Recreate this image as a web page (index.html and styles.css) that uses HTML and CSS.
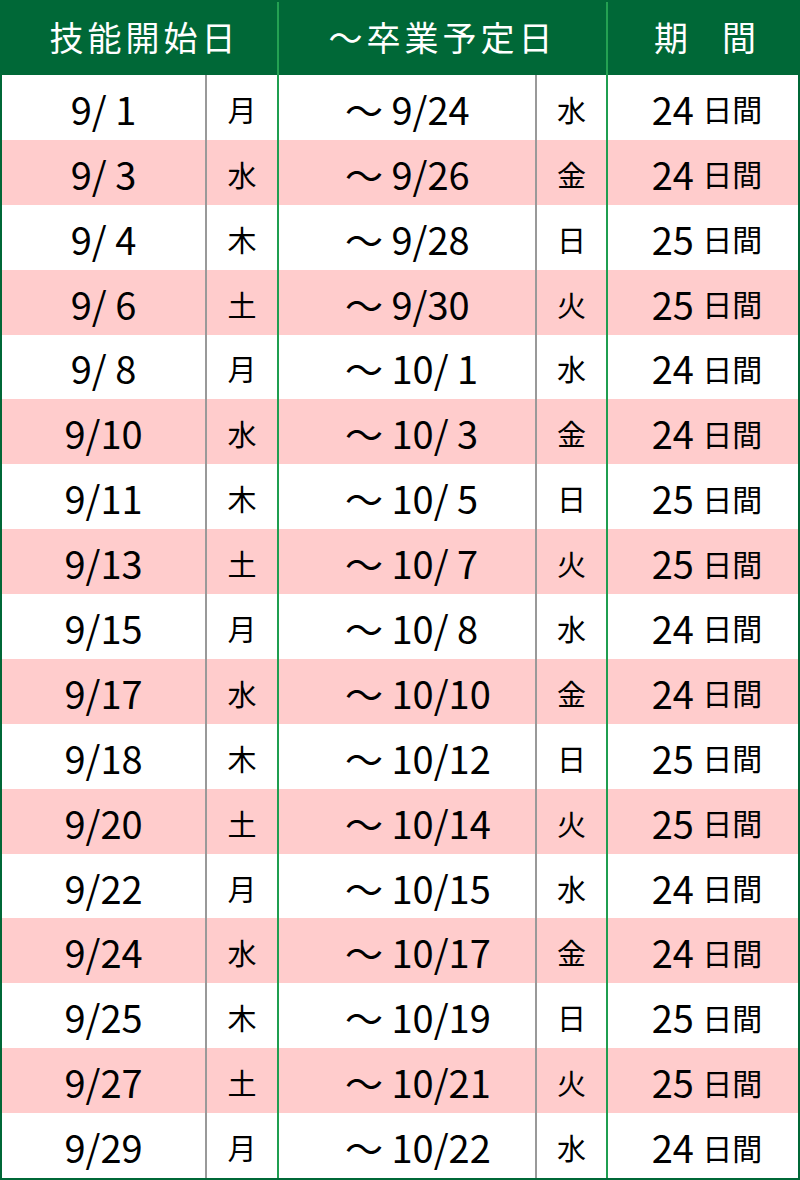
FILE: index.html
```html
<!DOCTYPE html>
<html lang="ja">
<head>
<meta charset="utf-8">
<title>日程表</title>
<link rel="stylesheet" href="styles.css">
</head>
<body>
<div class="table">
  <div class="head">
    <div class="hcell h1">技能開始日</div>
    <div class="hcell h2">〜卒業予定日</div>
    <div class="hcell h3">期　間</div>
  </div>
  <div class="body">
    <div class="row"><div class="c start">9/ 1</div><div class="c dow">月</div><div class="c end">〜 9/24</div><div class="c dow2">水</div><div class="c days">24 <span class="unit">日間</span></div></div>
    <div class="row pink"><div class="c start">9/ 3</div><div class="c dow">水</div><div class="c end">〜 9/26</div><div class="c dow2">金</div><div class="c days">24 <span class="unit">日間</span></div></div>
    <div class="row"><div class="c start">9/ 4</div><div class="c dow">木</div><div class="c end">〜 9/28</div><div class="c dow2">日</div><div class="c days">25 <span class="unit">日間</span></div></div>
    <div class="row pink"><div class="c start">9/ 6</div><div class="c dow">土</div><div class="c end">〜 9/30</div><div class="c dow2">火</div><div class="c days">25 <span class="unit">日間</span></div></div>
    <div class="row"><div class="c start">9/ 8</div><div class="c dow">月</div><div class="c end">〜 10/ 1</div><div class="c dow2">水</div><div class="c days">24 <span class="unit">日間</span></div></div>
    <div class="row pink"><div class="c start">9/10</div><div class="c dow">水</div><div class="c end">〜 10/ 3</div><div class="c dow2">金</div><div class="c days">24 <span class="unit">日間</span></div></div>
    <div class="row"><div class="c start">9/11</div><div class="c dow">木</div><div class="c end">〜 10/ 5</div><div class="c dow2">日</div><div class="c days">25 <span class="unit">日間</span></div></div>
    <div class="row pink"><div class="c start">9/13</div><div class="c dow">土</div><div class="c end">〜 10/ 7</div><div class="c dow2">火</div><div class="c days">25 <span class="unit">日間</span></div></div>
    <div class="row"><div class="c start">9/15</div><div class="c dow">月</div><div class="c end">〜 10/ 8</div><div class="c dow2">水</div><div class="c days">24 <span class="unit">日間</span></div></div>
    <div class="row pink"><div class="c start">9/17</div><div class="c dow">水</div><div class="c end">〜 10/10</div><div class="c dow2">金</div><div class="c days">24 <span class="unit">日間</span></div></div>
    <div class="row"><div class="c start">9/18</div><div class="c dow">木</div><div class="c end">〜 10/12</div><div class="c dow2">日</div><div class="c days">25 <span class="unit">日間</span></div></div>
    <div class="row pink"><div class="c start">9/20</div><div class="c dow">土</div><div class="c end">〜 10/14</div><div class="c dow2">火</div><div class="c days">25 <span class="unit">日間</span></div></div>
    <div class="row"><div class="c start">9/22</div><div class="c dow">月</div><div class="c end">〜 10/15</div><div class="c dow2">水</div><div class="c days">24 <span class="unit">日間</span></div></div>
    <div class="row pink"><div class="c start">9/24</div><div class="c dow">水</div><div class="c end">〜 10/17</div><div class="c dow2">金</div><div class="c days">24 <span class="unit">日間</span></div></div>
    <div class="row"><div class="c start">9/25</div><div class="c dow">木</div><div class="c end">〜 10/19</div><div class="c dow2">日</div><div class="c days">25 <span class="unit">日間</span></div></div>
    <div class="row pink"><div class="c start">9/27</div><div class="c dow">土</div><div class="c end">〜 10/21</div><div class="c dow2">火</div><div class="c days">25 <span class="unit">日間</span></div></div>
    <div class="row"><div class="c start">9/29</div><div class="c dow">月</div><div class="c end">〜 10/22</div><div class="c dow2">水</div><div class="c days">24 <span class="unit">日間</span></div></div>
  </div>
</div>
</body>
</html>
```

FILE: styles.css
```css
html, body {
  margin: 0;
  padding: 0;
  background: #ffffff;
}

.table {
  width: 800px;
  height: 1180px;
  box-sizing: border-box;
  border-left: 2px solid #006837;
  border-right: 2px solid #006837;
  border-bottom: 2px solid #006837;
  display: flex;
  flex-direction: column;
  font-family: "Noto Sans CJK JP", "Noto Sans", sans-serif;
  color: #000;
}

.head {
  height: 75px;
  flex: none;
  background: #006837;
  display: grid;
  grid-template-columns: 277px 329px 190px;
  box-sizing: border-box;
  border-top: 2px solid #006837;
}

.hcell {
  color: #ffffff;
  font-size: 34px;
  letter-spacing: 4px;
  display: flex;
  align-items: center;
  justify-content: center;
  padding-bottom: 4px;
  box-sizing: border-box;
}

.h1 {
  border-right: 2px solid #24a152;
  padding-left: 10px;
}

.h2 {
  border-right: 2px solid #24a152;
}

.h3 {
  letter-spacing: 0;
  padding-left: 4px;
}

.body {
  flex: 1;
  display: grid;
  grid-template-rows: repeat(17, 1fr);
}

.row {
  display: grid;
  grid-template-columns: 205px 72px 258px 71px 190px;
}

.row.pink {
  background: #ffcccc;
}

.c {
  display: flex;
  align-items: center;
  box-sizing: border-box;
  padding-top: 2px;
}

.start {
  justify-content: center;
  font-size: 38px;
  border-right: 2px solid #999999;
}

.dow {
  justify-content: center;
  font-size: 29px;
  border-right: 2px solid #1f9e50;
  padding-top: 3px;
}

.end {
  justify-content: flex-start;
  padding-left: 66px;
  font-size: 38px;
  border-right: 2px solid #999999;
  white-space: pre;
}

.dow2 {
  justify-content: center;
  font-size: 29px;
  border-right: 2px solid #1f9e50;
  padding-top: 3px;
}

.days {
  justify-content: center;
  font-size: 38px;
  white-space: pre;
  padding-left: 8px;
}

.unit {
  font-size: 30px;
}
```
